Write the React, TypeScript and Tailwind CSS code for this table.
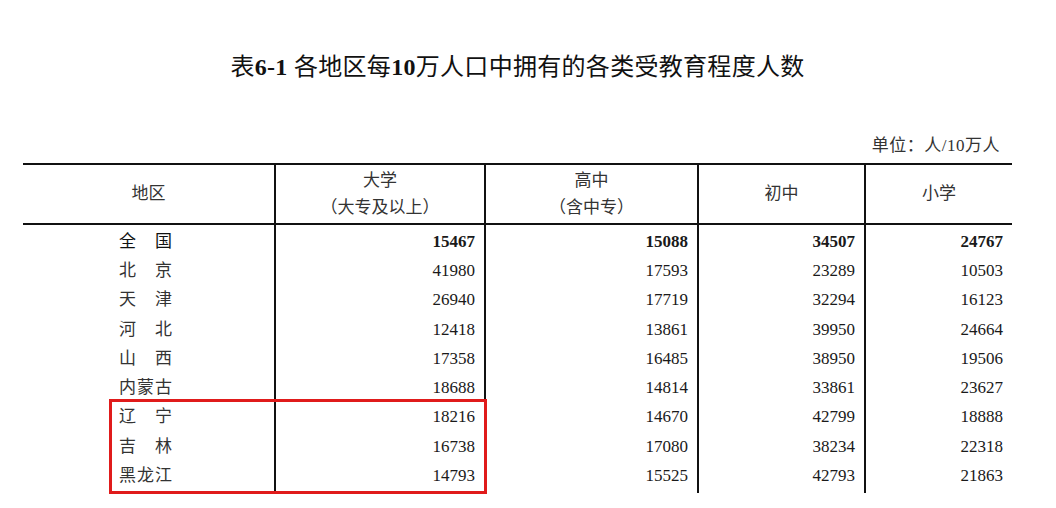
import React from "react";

const FONT = '"Liberation Serif", "Noto Sans CJK SC", serif';

type Row = { name: string[]; vals: string[]; bold?: boolean };

const rows: Row[] = [
  { name: ["全", "国"], vals: ["15467", "15088", "34507", "24767"], bold: true },
  { name: ["北", "京"], vals: ["41980", "17593", "23289", "10503"] },
  { name: ["天", "津"], vals: ["26940", "17719", "32294", "16123"] },
  { name: ["河", "北"], vals: ["12418", "13861", "39950", "24664"] },
  { name: ["山", "西"], vals: ["17358", "16485", "38950", "19506"] },
  { name: ["内", "蒙", "古"], vals: ["18688", "14814", "33861", "23627"] },
  { name: ["辽", "宁"], vals: ["18216", "14670", "42799", "18888"] },
  { name: ["吉", "林"], vals: ["16738", "17080", "38234", "22318"] },
  { name: ["黑", "龙", "江"], vals: ["14793", "15525", "42793", "21863"] },
];

const COLS = "grid grid-cols-[251px_210px_213px_167px_148px]";

export default function App() {
  return (
    <div
      className="relative w-[1056px] h-[508px] bg-white overflow-hidden"
      style={{ fontFamily: FONT }}
    >
      <div className="ml-[23px] w-[989px]">
        <h1 className="mt-[51px] h-[32px] text-center text-[24px] leading-[32px] font-normal text-[#111] tracking-[0.3px]">
          表<span className="font-bold">6-1</span> 各地区每
          <span className="font-bold">10</span>万人口中拥有的各类受教育程度人数
        </h1>
        <div className="mt-[51px] h-[24px] pr-[12px] text-right text-[17px] leading-[24px] text-[#333] tracking-[0.5px]">
          单位：人/10万人
        </div>
        <div className="mt-[5px] border-t-2 border-[#111]">
          {/* header */}
          <div className={`${COLS} h-[60px] border-b-2 border-[#111] text-[17px] text-[#333]`}>
            <div className="flex items-center justify-center">地区</div>
            <div className="flex flex-col items-center justify-center border-l-2 border-[#111] leading-[27px]">
              <span>大学</span>
              <span>（大专及以上）</span>
            </div>
            <div className="flex flex-col items-center justify-center border-l-2 border-[#111] leading-[27px]">
              <span>高中</span>
              <span>（含中专）</span>
            </div>
            <div className="flex items-center justify-center border-l-2 border-[#111]">初中</div>
            <div className="flex items-center justify-center border-l-2 border-[#111]">小学</div>
          </div>
          {/* body */}
          <div className={`${COLS} text-[17px]`}>
            <div className="flex flex-col pt-[2px] pb-[3px]">
              {rows.map((r, i) => (
                <div key={i} className="h-[29.25px] flex items-center pl-[96px]">
                  <div
                    className={`flex w-[53px] justify-between ${r.bold ? "text-[#111]" : "text-[#333]"}`}
                  >
                    {r.name.map((c, j) => (
                      <span key={j}>{c}</span>
                    ))}
                  </div>
                </div>
              ))}
            </div>
            {[0, 1, 2, 3].map((ci) => (
              <div key={ci} className="flex flex-col pt-[2px] pb-[3px] border-l-2 border-[#111]">
                {rows.map((r, i) => (
                  <div
                    key={i}
                    className={`h-[29.25px] flex items-center justify-end pr-[9px] text-[#1a1a1a] ${r.bold ? "font-bold" : ""}`}
                  >
                    {r.vals[ci]}
                  </div>
                ))}
              </div>
            ))}
          </div>
        </div>
      </div>
      <div className="absolute left-[109px] top-[399px] w-[378px] h-[95px] border-[3px] border-[#e01b1b]" />
    </div>
  );
}
